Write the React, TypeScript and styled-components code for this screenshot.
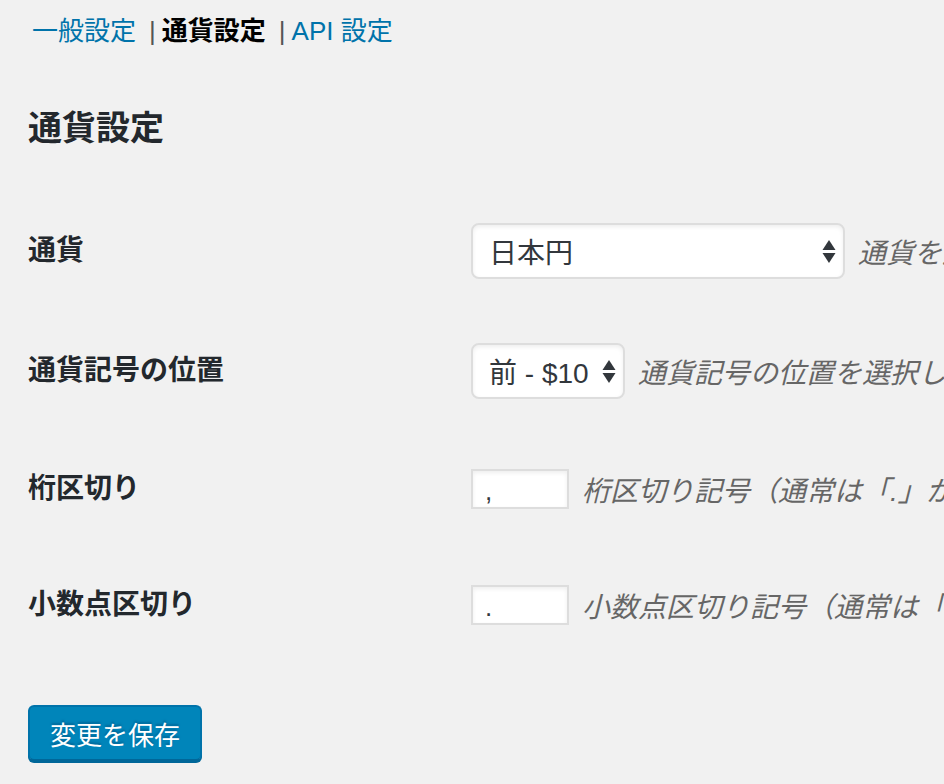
import styled, { createGlobalStyle } from "styled-components";

const GlobalStyle = createGlobalStyle`
  html, body {
    margin: 0;
    padding: 0;
    background: #f1f1f1;
    overflow: hidden;
  }
  body {
    font-family: "Liberation Sans", "Noto Sans CJK JP", sans-serif;
    color: #444;
  }
`;

const Page = styled.div`
  width: 944px;
  height: 784px;
  padding-left: 28px;
  box-sizing: border-box;
  white-space: nowrap;
  overflow: hidden;
`;

const SubNav = styled.ul`
  list-style: none;
  margin: 13px 0 0;
  padding: 0 0 0 4px;
  display: flex;
  align-items: center;
  font-size: 26px;
  line-height: 36px;
`;

const NavItem = styled.li`
  display: flex;
  align-items: center;
`;

const NavLink = styled.a<{ $current?: boolean }>`
  color: ${(p) => (p.$current ? "#000" : "#0073aa")};
  font-weight: ${(p) => (p.$current ? 700 : 400)};
  text-decoration: none;
`;

const Sep = styled.span`
  color: #555;
  margin: 0 6px 0 13px;
`;

const Title = styled.h2`
  margin: 57px 0 41px;
  font-size: 34px;
  line-height: 44px;
  font-weight: 700;
  color: #23282d;
`;

const Row = styled.div<{ $h: number }>`
  display: grid;
  grid-template-columns: 443px auto;
  align-items: center;
  height: ${(p) => p.$h}px;
`;

const Label = styled.label`
  font-size: 28px;
  font-weight: 700;
  color: #23282d;
  line-height: 36px;
`;

const Field = styled.div`
  display: flex;
  align-items: center;
  gap: 13px;
`;

const SelectBox = styled.div<{ $w: number }>`
  width: ${(p) => p.$w}px;
  height: 56px;
  box-sizing: border-box;
  background: #fff;
  border: 2px solid #ddd;
  border-radius: 8px;
  box-shadow: inset 0 2px 4px rgba(0, 0, 0, 0.07);
  display: flex;
  align-items: center;
  justify-content: space-between;
  padding: 0 7px 0 16px;
  font-size: 28px;
  color: #32373c;
`;

const Arrows = () => (
  <svg width="14" height="23" viewBox="0 0 14 23">
    <path d="M7 0 L13.5 10 L0.5 10 Z" fill="#32373c" />
    <path d="M0.5 13 L13.5 13 L7 23 Z" fill="#32373c" />
  </svg>
);

const TextInput = styled.input`
  width: 98px;
  height: 40px;
  box-sizing: border-box;
  border: 2px solid #ddd;
  background: #fff;
  box-shadow: inset 0 2px 4px rgba(0, 0, 0, 0.07);
  padding: 4px 12px 0;
  font-size: 26px;
  font-family: "Liberation Sans", sans-serif;
  color: #32373c;
  outline: none;
`;

const Description = styled.span`
  font-size: 28px;
  font-style: italic;
  color: #666;
`;

const SubmitButton = styled.button`
  margin-top: 42px;
  height: 56px;
  padding: 0 20px;
  background: #0085ba;
  border: 2px solid #0073aa;
  border-bottom-color: #006799;
  border-radius: 6px;
  box-shadow: 0 2px 0 #006799;
  color: #fff;
  font-size: 26px;
  font-family: "Liberation Sans", "Noto Sans CJK JP", sans-serif;
  text-shadow: 0 -2px 2px #006799;
  cursor: pointer;
`;

const App = () => {
  return (
    <Page>
      <GlobalStyle />
      <SubNav>
        <NavItem>
          <NavLink href="#">一般設定</NavLink>
          <Sep>|</Sep>
        </NavItem>
        <NavItem>
          <NavLink $current href="#">
            通貨設定
          </NavLink>
          <Sep>|</Sep>
        </NavItem>
        <NavItem>
          <NavLink href="#">API 設定</NavLink>
        </NavItem>
      </SubNav>

      <Title>通貨設定</Title>

      <Row $h={120}>
        <Label>通貨</Label>
        <Field>
          <SelectBox $w={374}>
            <span>日本円</span>
            <Arrows />
          </SelectBox>
          <Description>通貨を選択してください。</Description>
        </Field>
      </Row>

      <Row $h={120}>
        <Label>通貨記号の位置</Label>
        <Field>
          <SelectBox $w={154}>
            <span>前 - $10</span>
            <Arrows />
          </SelectBox>
          <Description>通貨記号の位置を選択してください。</Description>
        </Field>
      </Row>

      <Row $h={116}>
        <Label>桁区切り</Label>
        <Field>
          <TextInput defaultValue="," />
          <Description>桁区切り記号（通常は「.」か「,」）</Description>
        </Field>
      </Row>

      <Row $h={116}>
        <Label>小数点区切り</Label>
        <Field>
          <TextInput defaultValue="." />
          <Description>小数点区切り記号（通常は「.」か「,」）</Description>
        </Field>
      </Row>

      <SubmitButton>変更を保存</SubmitButton>
    </Page>
  );
};

export default App;
